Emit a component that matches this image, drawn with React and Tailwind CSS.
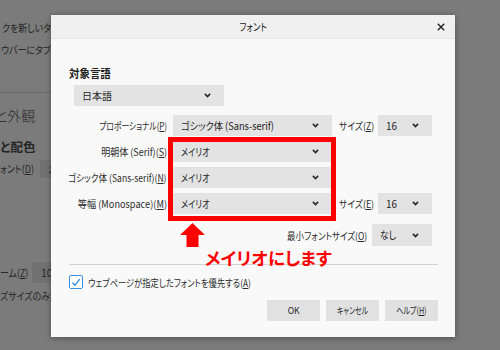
import React from "react";

function Chevron() {
  return (
    <svg width="7" height="5" viewBox="0 0 7 5" className="shrink-0">
      <path d="M0.9 0.9l2.6 2.6 2.6-2.6" fill="none" stroke="#2a2a2a" strokeWidth="1.7" />
    </svg>
  );
}

function N({ s, o, children }) {
  return <span className={"inline-block shrink-0 whitespace-nowrap " + (o || "origin-left") + " " + (s || "scale-x-[0.8]")}>{children}</span>;
}

function Select({ className, children, s }) {
  return (
    <div className={"flex items-center justify-between bg-[#e3e3e3] pl-[8px] pr-[13px] text-[10.5px] text-[#1e1e1e] whitespace-nowrap " + className}>
      <N s={s}>{children}</N>
      <Chevron />
    </div>
  );
}

function Label({ s, children }) {
  return (
    <div className="w-[98px] flex justify-end">
      <N s={s} o="origin-right">{children}</N>
    </div>
  );
}

function U({ children }) {
  return <span className="underline underline-offset-[1px]">{children}</span>;
}

export default function App() {
  return (
    <div className="relative w-[500px] h-[350px] overflow-hidden bg-[#7b7b7b] font-['Noto_Sans_CJK_JP',sans-serif] [font-feature-settings:'palt'] text-[#262626]">
      {/* dimmed background page */}
      <div className="flex flex-col text-[10.5px]">
        <div className="mt-[20px] ml-[2px] h-[16px] leading-[16px]">
          <N s="scale-x-[0.85]">クを新しいタブで開く</N>
        </div>
        <div className="mt-[6px] ml-[1px] h-[16px] leading-[16px]">
          <N s="scale-x-[0.85]">ウバーにタブのプレビューを表示する</N>
        </div>
        <div className="mt-[34px] h-px w-[60px] bg-[#696969]" />
        <div className="mt-[11px] -ml-[5px] h-[22px] leading-[22px] text-[14px] font-light text-[#2e2e2e] whitespace-nowrap">と外観</div>
        <div className="mt-[12px] h-[18px] leading-[18px] text-[12.5px] font-bold whitespace-nowrap">と配色</div>
        <div className="mt-[4px] flex items-center h-[18px]">
          <div className="w-[40px]">
            <N s="scale-x-[0.85]">ォント(<U>D</U>)</N>
          </div>
          <div className="h-[18px] w-[80px] bg-[#717171] pl-[8px] leading-[18px]">メイリオ</div>
        </div>
        <div className="mt-[84px] flex items-center h-[21px]">
          <div className="w-[32px]">
            <N s="scale-x-[0.85]">ーム(<U>Z</U>)</N>
          </div>
          <div className="h-[21px] w-[60px] bg-[#717171] pl-[9px] leading-[21px]">100%</div>
        </div>
        <div className="mt-[5px] h-[16px] leading-[16px]">
          <N s="scale-x-[0.85]">ズサイズのみ変更</N>
        </div>
      </div>

      {/* dialog */}
      <div className="absolute left-[51px] top-[15px] w-[404px] h-[322px] bg-[#f9f9f9] shadow-[0_1px_6px_rgba(0,0,0,0.35)] flex flex-col text-[#2b2b2b]">
        <div className="h-[24px] shrink-0 bg-[#f0f0f0] border-b border-[#e6e6e6] grid grid-cols-[1fr_auto_1fr] items-center">
          <div />
          <div className="text-[10.5px] text-[#1a1a1a]">
            <N s="scale-x-[0.8]" o="origin-center">フォント</N>
          </div>
          <div className="flex justify-end pr-[10px]">
            <svg width="8" height="8" viewBox="0 0 8 8">
              <path d="M0.8 0.8l6.4 6.4M7.2 0.8l-6.4 6.4" stroke="#222" strokeWidth="1.4" />
            </svg>
          </div>
        </div>

        <div className="flex flex-col pl-[18px] pr-[17px]">
          <div className="mt-[25px] h-[18px] leading-[18px] text-[11px] font-bold text-[#1e1e1e]">
            <N s="scale-x-[0.95]">対象言語</N>
          </div>
          <Select className="mt-[3px] ml-[5px] w-[150px] h-[21px]" s="scale-x-[0.95]">日本語</Select>

          <div className="mt-[9px] flex flex-col gap-[5px] text-[10px]">
            <div className="flex items-center gap-[6px] h-[21px]">
              <Label s="scale-x-[0.78]">プロポーショナル(<U>P</U>)</Label>
              <Select className="w-[159px] h-[21px]" s="scale-x-[0.88]">ゴシック体 (Sans-serif)</Select>
              <div className="ml-[1px] w-[33px] flex">
                <N s="scale-x-[0.88]">サイズ(<U>Z</U>)</N>
              </div>
              <Select className="w-[54px] h-[21px]" s="scale-x-[0.95]">16</Select>
            </div>
            <div className="flex items-center gap-[6px] h-[21px]">
              <Label s="scale-x-[0.9]">明朝体 (Serif)(<U>S</U>)</Label>
              <Select className="w-[159px] h-[21px]" s="scale-x-[0.78]">メイリオ</Select>
            </div>
            <div className="flex items-center gap-[6px] h-[21px]">
              <Label s="scale-x-[0.86]">ゴシック体 (Sans-serif)(<U>N</U>)</Label>
              <Select className="w-[159px] h-[21px]" s="scale-x-[0.78]">メイリオ</Select>
            </div>
            <div className="flex items-center gap-[6px] h-[21px]">
              <Label s="scale-x-[0.92]">等幅 (Monospace)(<U>M</U>)</Label>
              <Select className="w-[159px] h-[21px]" s="scale-x-[0.78]">メイリオ</Select>
              <div className="ml-[1px] w-[33px] flex">
                <N s="scale-x-[0.88]">サイズ(<U>E</U>)</N>
              </div>
              <Select className="w-[54px] h-[21px]" s="scale-x-[0.95]">16</Select>
            </div>
          </div>

          <div className="mt-[10px] flex items-center justify-end gap-[5px] pr-[6px] h-[22px] text-[10px]">
            <N s="scale-x-[0.85]" o="origin-right">最小フォントサイズ(<U>O</U>)</N>
            <Select className="w-[60px] h-[22px]" s="scale-x-[0.85]">なし</Select>
          </div>

          <div className="mt-[18px] h-px bg-[#d2d2d2]" />

          <div className="mt-[10px] flex items-center gap-[5px] h-[14px] text-[10px]">
            <div className="w-[14px] h-[14px] shrink-0 rounded-[2px] border border-[#3b8ee0] bg-white flex items-center justify-center">
              <svg width="10" height="9" viewBox="0 0 10 9">
                <path d="M1.5 4.8l2.4 2.5L8.8 1.2" fill="none" stroke="#2f86dc" strokeWidth="1.3" />
              </svg>
            </div>
            <N s="scale-x-[0.83]">ウェブページが指定したフォントを優先する(<U>A</U>)</N>
          </div>

          <div className="mt-[11px] flex justify-end gap-[6px] text-[9.5px] text-[#1e1e1e]">
            <div className="w-[53px] h-[21px] bg-[#e1e1e1] flex items-center justify-center">
              <N s="scale-x-[0.9]" o="origin-center">OK</N>
            </div>
            <div className="w-[53px] h-[21px] bg-[#e1e1e1] flex items-center justify-center">
              <N s="scale-x-[0.72]" o="origin-center">キャンセル</N>
            </div>
            <div className="w-[53px] h-[21px] bg-[#e1e1e1] flex items-center justify-center">
              <N s="scale-x-[0.75]" o="origin-center">ヘルプ(<U>H</U>)</N>
            </div>
          </div>
        </div>

        {/* annotation overlays */}
        <div className="absolute left-[117px] top-[122px] w-[168px] h-[84px] border-[5px] border-[#ff0000]" />
        <svg className="absolute left-[129px] top-[208px]" width="25" height="24" viewBox="0 0 25 24">
          <path d="M12.5 0L25 12H18.5V24H6.5V12H0Z" fill="#ff0000" />
        </svg>
        <div className="absolute left-[154px] top-[233px] leading-[20px] text-[17.5px] font-bold text-[#ff0000] whitespace-nowrap">メイリオにします</div>
      </div>
    </div>
  );
}
